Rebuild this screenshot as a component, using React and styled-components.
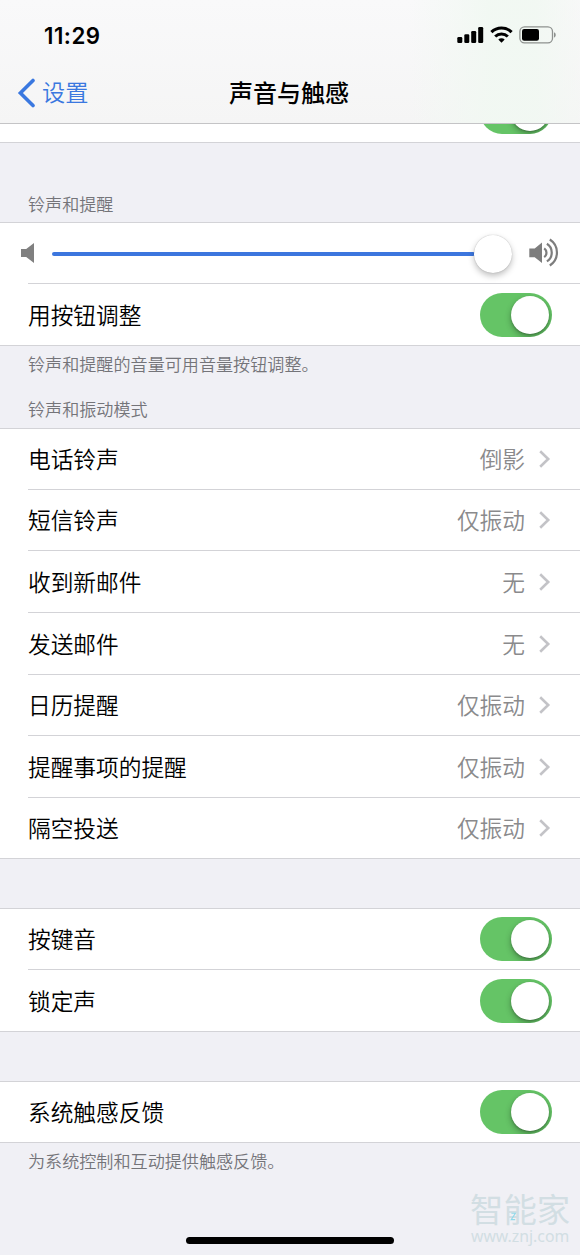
import React from "react";
import styled, { createGlobalStyle } from "styled-components";

const GlobalStyle = createGlobalStyle`
  * { box-sizing: border-box; }
  body { margin: 0; background: #f0f0f5; }
`;

const line = "#d3d3d7";

const Screen = styled.div`
  position: relative;
  width: 580px;
  height: 1255px;
  overflow: hidden;
  background: #f0f0f5;
  color: #000;
  font-family: "Inter", "Noto Sans CJK SC", sans-serif;
`;

const Header = styled.header`
  height: 124px;
  border-bottom: 1px solid #c4c4c6;
  background:
    linear-gradient(90deg, rgba(241, 248, 242, 0) 410px, rgba(241, 248, 242, 0.9) 490px, rgba(241, 248, 242, 0.9) 535px, rgba(244, 247, 244, 0.4) 580px),
    linear-gradient(#f9f9fa, #f5f5f5);
`;

const StatusBar = styled.div`
  display: flex;
  align-items: center;
  justify-content: space-between;
  height: 62px;
  padding: 8px 23px 0 44px;
`;

const Clock = styled.span`
  font-size: 22.3px;
  font-weight: 600;
  letter-spacing: 0.5px;
`;

const StatusIcons = styled.div`
  display: flex;
  align-items: center;
  gap: 6px;
`;

const NavBar = styled.nav`
  display: grid;
  grid-template-columns: 1fr auto 1fr;
  align-items: center;
  height: 61px;
  padding: 0 19px 0 17px;
`;

const BackLink = styled.a`
  display: flex;
  align-items: center;
  gap: 7px;
  color: #3a78e0;
  font-size: 23.2px;
  font-weight: 350;
  line-height: 30px;
`;

const Title = styled.h1`
  margin: 0;
  padding-top: 2px;
  font-size: 24px;
  line-height: 30px;
  font-weight: 500;
`;

const Group = styled.section`
  background: #fff;
  border-bottom: 1px solid ${line};
  border-top: ${(p) => (p.$open ? "0" : `1px solid ${line}`)};
`;

const ClippedRow = styled.div`
  display: flex;
  justify-content: flex-end;
  align-items: flex-end;
  height: 18px;
  padding: 0 28px 8.5px 0;
  overflow: hidden;
`;

const Row = styled.div`
  display: flex;
  align-items: center;
  height: ${(p) => p.$height}px;
  margin-left: 28px;
  padding-right: 28px;
  border-bottom: ${(p) => (p.$last ? "0" : `1px solid ${line}`)};
  font-size: 22.7px;
  line-height: 30px;
`;

const Label = styled.span`
  flex: 1;
  padding-top: 2px;
  font-weight: 350;
`;

const Value = styled.span`
  margin-right: 14px;
  padding-top: 2px;
  color: #8a8a8c;
  font-weight: 350;
`;

const Caption = styled.p`
  display: flex;
  align-items: flex-end;
  margin: 0;
  height: ${(p) => p.$height}px;
  padding: 0 28px ${(p) => p.$bottom}px;
  font-size: 17.1px;
  font-weight: 350;
  line-height: 24px;
  color: #747479;
`;

const Spacer = styled.div`
  height: 49px;
`;

const Track = styled.span`
  display: flex;
  flex: none;
  justify-content: flex-end;
  align-items: center;
  width: 72px;
  height: 44px;
  padding: 3px;
  border-radius: 22px;
  background: #65c466;
  overflow: hidden;
`;

const Knob = styled.span`
  width: 38px;
  height: 38px;
  border-radius: 50%;
  background: #fff;
  box-shadow: 0 3px 6px rgba(0, 0, 0, 0.3), 0 1px 2px rgba(0, 0, 0, 0.2);
`;

const SliderRow = styled.div`
  display: flex;
  align-items: center;
  height: 60px;
  padding: 0 20px;
`;

const SliderTrack = styled.div`
  display: flex;
  align-items: center;
  width: 460px;
  margin: 1px 16px 0 16px;
`;

const SliderFill = styled.span`
  flex: 1;
  height: 4px;
  margin-right: -1px;
  border-radius: 2px;
  background: #3c76de;
`;

const SliderKnob = styled.span`
  width: 38px;
  height: 38px;
  border-radius: 50%;
  background: #fff;
  box-shadow: 0 3px 6px rgba(0, 0, 0, 0.25), 0 0 1px rgba(0, 0, 0, 0.3);
`;

const Divider = styled.div`
  height: 1px;
  margin-left: 28px;
  background: ${line};
`;

const HomeIndicator = styled.div`
  position: absolute;
  left: 186px;
  bottom: 11px;
  width: 208px;
  height: 7px;
  border-radius: 4px;
  background: #000;
`;

const Watermark = styled.div`
  position: absolute;
  left: 470px;
  top: 1194px;
  width: 102px;
  color: #d2dee3;
`;

const WatermarkName = styled.div`
  font-size: 33.4px;
  line-height: 33px;
  font-weight: 400;
`;

const WatermarkUrl = styled.div`
  font-family: "Noto Sans", sans-serif;
  padding-left: 1px;
  font-size: 15.8px;
  line-height: 18px;
`;

const WatermarkMark = styled.svg`
  position: absolute;
  left: 40px;
  top: 18px;
`;

const SignalIcon = () => (
  <svg width="27" height="18" viewBox="0 0 27 18">
    <rect x="0.3" y="11" width="5" height="6" rx="1.3" />
    <rect x="7.3" y="8.3" width="5" height="8.7" rx="1.3" />
    <rect x="14.2" y="5" width="5" height="12" rx="1.3" />
    <rect x="21.2" y="1" width="5" height="16" rx="1.3" />
  </svg>
);

const WifiIcon = () => (
  <svg width="23" height="18" viewBox="0.5 0 23 18" fill="none" stroke="#000">
    <path d="M1.9 6.2a14.3 14.3 0 0 1 20.2 0" strokeWidth="3.1" />
    <path d="M5.7 10.5a8.9 8.9 0 0 1 12.6 0" strokeWidth="3" />
    <path d="M12 16.7l-3.2-3.1a4.6 4.6 0 0 1 6.4 0z" fill="#000" stroke="none" />
  </svg>
);

const BatteryIcon = () => (
  <svg width="38" height="18" viewBox="0 0 38 18">
    <rect x="0.9" y="0.9" width="32.6" height="16" rx="4.6" fill="none" stroke="#8e918f" strokeWidth="1.3" />
    <rect x="3" y="3" width="17" height="11.8" rx="2.2" />
    <path d="M35 6.2c2.3.8 2.3 4.6 0 5.4z" fill="#8e918f" />
  </svg>
);

const BackIcon = () => (
  <svg width="18" height="30" viewBox="0 0 18 30" fill="none" stroke="#3a78e0" strokeWidth="3.6" strokeLinecap="round" strokeLinejoin="miter">
    <path d="M16 2.4L3.4 15L16 27.6" />
  </svg>
);

const ChevronIcon = () => (
  <svg width="13" height="18" viewBox="0 0 13 18" fill="none" stroke="#c3c3c7" strokeWidth="2.6">
    <path d="M1.2 1.3L9.2 9L1.2 16.7" />
  </svg>
);

const SpeakerQuiet = () => (
  <svg width="16" height="22" viewBox="0 0 16 22" fill="#808080">
    <path d="M1 7h5.2L14 1v20l-7.8-6H1z" />
  </svg>
);

const SpeakerLoud = () => (
  <svg width="32" height="30" viewBox="0 0 32 30" fill="none" stroke="#7d7d7d" strokeWidth="2.2">
    <path d="M1.3 10.6h5.4L14 4.6v20.4l-7.3-5.8H1.3z" fill="#7d7d7d" stroke="none" />
    <path d="M16.2 10.4a5.4 5.4 0 0 1 0 8.8" />
    <path d="M18.9 5.8a10.4 10.4 0 0 1 0 17.6" />
    <path d="M21.8 1.5a15.4 15.4 0 0 1 0 26" />
  </svg>
);

const Toggle = () => (
  <Track>
    <Knob />
  </Track>
);

const sounds = [
  { name: "电话铃声", value: "倒影", height: 61 },
  { name: "短信铃声", value: "仅振动", height: 61 },
  { name: "收到新邮件", value: "无", height: 62 },
  { name: "发送邮件", value: "无", height: 62 },
  { name: "日历提醒", value: "仅振动", height: 61 },
  { name: "提醒事项的提醒", value: "仅振动", height: 62 },
  { name: "隔空投送", value: "仅振动", height: 60 },
];

export default function App() {
  return (
    <Screen>
      <GlobalStyle />
      <Header>
        <StatusBar>
          <Clock>11:29</Clock>
          <StatusIcons>
            <SignalIcon />
            <WifiIcon />
            <BatteryIcon />
          </StatusIcons>
        </StatusBar>
        <NavBar>
          <BackLink>
            <BackIcon />
            设置
          </BackLink>
          <Title>声音与触感</Title>
        </NavBar>
      </Header>

      <Group $open>
        <ClippedRow>
          <Toggle />
        </ClippedRow>
      </Group>

      <Caption $height={79} $bottom={5}>铃声和提醒</Caption>
      <Group>
        <SliderRow>
          <SpeakerQuiet />
          <SliderTrack>
            <SliderFill />
            <SliderKnob />
          </SliderTrack>
          <SpeakerLoud />
        </SliderRow>
        <Divider />
        <Row $last $height={61}>
          <Label>用按钮调整</Label>
          <Toggle />
        </Row>
      </Group>
      <Caption $height={31} $bottom={0}>铃声和提醒的音量可用音量按钮调整。</Caption>
      <Caption $height={51} $bottom={6}>铃声和振动模式</Caption>

      <Group>
        {sounds.map(({ name, value, height }, i) => (
          <Row key={name} $last={i === sounds.length - 1} $height={height}>
            <Label>{name}</Label>
            <Value>{value}</Value>
            <ChevronIcon />
          </Row>
        ))}
      </Group>
      <Spacer />

      <Group>
        <Row $height={61}>
          <Label>按键音</Label>
          <Toggle />
        </Row>
        <Row $last $height={61}>
          <Label>锁定声</Label>
          <Toggle />
        </Row>
      </Group>
      <Spacer />

      <Group>
        <Row $last $height={60}>
          <Label>系统触感反馈</Label>
          <Toggle />
        </Row>
      </Group>
      <Caption $height={31} $bottom={0}>为系统控制和互动提供触感反馈。</Caption>

      <Watermark>
        <WatermarkName>智能家</WatermarkName>
        <WatermarkUrl>www.znj.com</WatermarkUrl>
        <WatermarkMark width="7" height="9" viewBox="0 0 7 9" fill="none" stroke="#8fd9ea" strokeWidth="1.1">
          <path d="M1.4 1.2h4L1.2 7.6h4" />
        </WatermarkMark>
      </Watermark>
      <HomeIndicator />
    </Screen>
  );
}
